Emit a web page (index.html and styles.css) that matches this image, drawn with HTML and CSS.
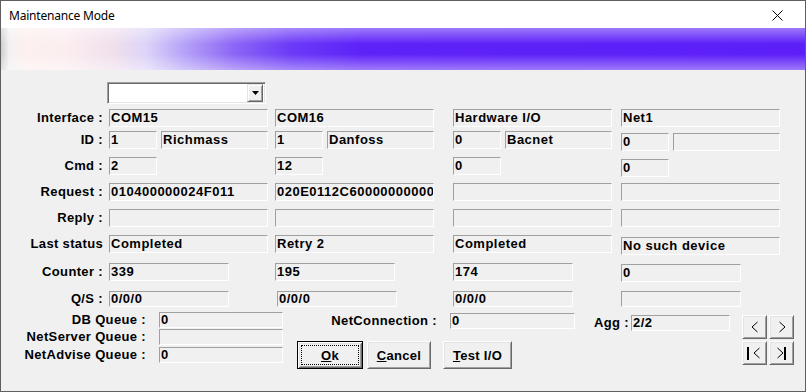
FILE: index.html
```html
<!DOCTYPE html>
<html lang="en">
<head>
    <meta charset="UTF-8">
    <title>Maintenance Mode</title>
    <link rel="stylesheet" href="styles.css">
</head>
<body>
<div class="window">
    <div class="titlebar">
        <span class="title">Maintenance Mode</span>
        <svg class="close" width="11" height="11" viewBox="0 0 11 11">
            <path d="M0.5 0.5 L10.5 10.5 M10.5 0.5 L0.5 10.5" stroke="#000" stroke-width="1" fill="none"/>
        </svg>
    </div>
    <div class="banner"></div>

    <div class="content">
        <div class="combo">
            <span class="combo-btn">
                <svg width="7" height="4" viewBox="0 0 7 4"><path d="M0 0 H7 L3.5 4 Z" fill="#000"/></svg>
            </span>
        </div>

        <div class="row tight">
            <div class="label">Interface :</div>
            <div class="cell"><div class="field">COM15</div></div>
            <div class="cell"><div class="field">COM16</div></div>
            <div class="cell"><div class="field">Hardware I/O</div></div>
            <div class="cell"><div class="field">Net1</div></div>
        </div>

        <div class="row">
            <div class="label">ID :</div>
            <div class="cell"><div class="field sm">1</div><div class="field name">Richmass</div></div>
            <div class="cell"><div class="field sm">1</div><div class="field name">Danfoss</div></div>
            <div class="cell"><div class="field sm">0</div><div class="field name">Bacnet</div></div>
            <div class="cell low"><div class="field sm">0</div><div class="field name"></div></div>
        </div>

        <div class="row">
            <div class="label">Cmd :</div>
            <div class="cell"><div class="field sm">2</div></div>
            <div class="cell"><div class="field sm">12</div></div>
            <div class="cell"><div class="field sm">0</div></div>
            <div class="cell low"><div class="field sm">0</div></div>
        </div>

        <div class="row">
            <div class="label">Request :</div>
            <div class="cell"><div class="field">010400000024F011</div></div>
            <div class="cell"><div class="field">020E0112C60000000000</div></div>
            <div class="cell"><div class="field"></div></div>
            <div class="cell"><div class="field"></div></div>
        </div>

        <div class="row">
            <div class="label">Reply :</div>
            <div class="cell"><div class="field"></div></div>
            <div class="cell"><div class="field"></div></div>
            <div class="cell"><div class="field"></div></div>
            <div class="cell"><div class="field"></div></div>
        </div>

        <div class="row wide">
            <div class="label">Last status</div>
            <div class="cell"><div class="field">Completed</div></div>
            <div class="cell"><div class="field">Retry 2</div></div>
            <div class="cell"><div class="field">Completed</div></div>
            <div class="cell low"><div class="field">No such device</div></div>
        </div>

        <div class="row wide">
            <div class="label">Counter :</div>
            <div class="cell"><div class="field md">339</div></div>
            <div class="cell"><div class="field md">195</div></div>
            <div class="cell"><div class="field md">174</div></div>
            <div class="cell low1"><div class="field md">0</div></div>
        </div>

        <div class="row short">
            <div class="label">Q/S :</div>
            <div class="cell"><div class="field md thin">0/0/0</div></div>
            <div class="cell shift"><div class="field md thin">0/0/0</div></div>
            <div class="cell"><div class="field md thin">0/0/0</div></div>
            <div class="cell"><div class="field md thin"></div></div>
        </div>

        <div class="bottom">
            <div class="queues">
                <div class="label">DB Queue :</div>
                <div class="field q thin">0</div>
                <div class="label">NetServer Queue :</div>
                <div class="field q thin"></div>
                <div class="label">NetAdvise Queue :</div>
                <div class="field q thin">0</div>
            </div>

            <div class="actions">
                <div class="netconn">
                    <span class="label">NetConnection :</span>
                    <div class="field nc thin">0</div>
                </div>
                <div class="buttons">
                    <button class="btn default ok"><u>O</u>k</button>
                    <button class="btn cancel"><u>C</u>ancel</button>
                    <button class="btn test"><u>T</u>est I/O</button>
                </div>
            </div>

            <div class="agg">
                <span class="label">Agg :</span>
                <div class="field ag thin">2/2</div>
            </div>

            <div class="nav">
                <button class="btn navbtn">
                    <svg width="23" height="22" viewBox="0 0 23 22"><polyline points="14.5,6 9,11 14.5,16" fill="none" stroke="#000"/></svg>
                </button>
                <button class="btn navbtn">
                    <svg width="23" height="22" viewBox="0 0 23 22"><polyline points="9.5,6 15,11 9.5,16" fill="none" stroke="#000"/></svg>
                </button>
                <button class="btn navbtn">
                    <svg width="23" height="22" viewBox="0 0 23 22"><rect x="4" y="5" width="2" height="13" fill="#000"/><polyline points="16.5,6 11,11 16.5,16" fill="none" stroke="#000"/></svg>
                </button>
                <button class="btn navbtn">
                    <svg width="23" height="22" viewBox="0 0 23 22"><polyline points="7.5,6 13,11 7.5,16" fill="none" stroke="#000"/><rect x="14" y="5" width="2" height="13" fill="#000"/></svg>
                </button>
            </div>
        </div>
    </div>
</div>
</body>
</html>
```

FILE: styles.css
```css
:root {
    --face: #f0f0f0;
    --shadow: #a0a0a0;
    --dark: #696969;
    --light: #e3e3e3;
    --frame: #5f5f5f;
}

body {
    margin: 0;
    background: var(--face);
    font-family: "Liberation Sans", Arial, sans-serif;
    font-size: 13px;
    font-weight: bold;
    color: #000;
}

.window {
    width: 806px;
    height: 392px;
    box-sizing: border-box;
    border: 1px solid var(--frame);
    background: var(--face);
    overflow: hidden;
}

.titlebar {
    height: 27px;
    background: #fff;
    display: flex;
    align-items: center;
    justify-content: space-between;
    padding: 0 22px 0 8px;
}

.title {
    font-family: "Noto Sans", "Open Sans", sans-serif;
    font-weight: normal;
    font-size: 12px;
    letter-spacing: -0.2px;
    margin-top: 2px;
}

.close {
    margin-top: 1px;
}

.banner {
    height: 42px;
    background:
        linear-gradient(to bottom, rgba(255, 255, 255, 0.4), rgba(255, 255, 255, 0) 38%, rgba(255, 255, 255, 0) 62%, rgba(255, 255, 255, 0.4)),
        linear-gradient(to right, #cfcfcf 0, #f3f1f1 1%, #fdf0ef 3%, #fbeef0 8%, #f0e0ec 14%, #ddd4f8 18%, #b4a0f8 23%, #8c66f6 29%, #6c3af8 36%, #5e22f8 45%, #5c1ff8 100%);
}

/* combo box */
.combo {
    width: 159px;
    height: 22px;
    box-sizing: border-box;
    margin: 12px 0 0 106px;
    padding: 1px 2px 1px 0;
    background: #fff;
    border: 1px solid;
    border-color: var(--shadow) #fff #fff var(--shadow);
    box-shadow: inset 1px 1px var(--dark), inset -1px -1px var(--light);
    display: flex;
    justify-content: flex-end;
}

.combo-btn {
    width: 16px;
    height: 18px;
    box-sizing: border-box;
    background: var(--face);
    border: 1px solid;
    border-color: var(--light) var(--dark) var(--dark) var(--light);
    box-shadow: inset 1px 1px #fff, inset -1px -1px var(--shadow);
    display: flex;
    align-items: center;
    justify-content: center;
}

/* data grid */
.row {
    display: grid;
    grid-template-columns: 108px 166px 178px 168px 159px;
    height: 26px;
    align-items: start;
}

.combo + .row {
    margin-top: 5px;
}

.row.tight { height: 22px; }
.row.wide { height: 28px; }
.row.short { height: 16px; }

.label {
    text-align: right;
    padding-right: 6px;
    line-height: 18px;
    letter-spacing: 0.35px;
    white-space: nowrap;
}

.row.short .label {
    line-height: 16px;
}

.cell {
    display: flex;
    gap: 4px;
}

.cell.low { margin-top: 2px; }
.cell.low1 { margin-top: 1px; }
.cell.shift { margin-left: 2px; }

.field {
    width: 159px;
    height: 18px;
    box-sizing: border-box;
    border: 1px solid;
    border-color: var(--shadow) #fff #fff var(--shadow);
    padding-left: 1px;
    line-height: 16px;
    letter-spacing: 0.5px;
    white-space: nowrap;
    overflow: hidden;
}

.field.sm { width: 48px; }
.field.name { width: 107px; }
.field.md { width: 120px; }
.field.thin { height: 16px; line-height: 14px; }

/* lower section */
.bottom {
    display: flex;
    align-items: flex-start;
    margin-top: 5px;
}

.queues {
    display: grid;
    grid-template-columns: 145px 124px;
    grid-template-rows: 17px 18px 16px;
    column-gap: 13px;
    align-items: start;
}

.queues .label {
    padding-right: 0;
    line-height: 16px;
}

.field.q { width: 124px; }

.actions {
    margin-left: 14px;
    width: 278px;
}

.netconn {
    display: flex;
    justify-content: flex-end;
    gap: 13px;
    margin-top: 1px;
}

.netconn .label,
.agg .label {
    padding-right: 0;
    line-height: 16px;
}

.field.nc { width: 125px; }

.buttons {
    display: flex;
    margin-top: 12px;
}

.btn {
    position: relative;
    height: 28px;
    padding: 0;
    box-sizing: border-box;
    background: var(--face);
    border: 1px solid;
    border-color: #fff var(--dark) var(--dark) #fff;
    box-shadow: inset 1px 1px var(--light), inset -1px -1px var(--shadow);
    font-family: "Liberation Sans", Arial, sans-serif;
    font-size: 13px;
    font-weight: bold;
    letter-spacing: 0.3px;
    color: #000;
}

.btn.default {
    border-color: #000;
    box-shadow: inset 1px 1px #fff, inset -1px -1px var(--dark), inset 2px 2px var(--light), inset -2px -2px var(--shadow);
}

.btn.default::after {
    content: "";
    position: absolute;
    inset: 3px;
    border: 1px dotted #000;
}

.btn.ok { width: 66px; }
.btn.cancel { width: 64px; margin-left: 4px; }
.btn.test { width: 69px; margin-left: 12px; }

.agg {
    display: flex;
    gap: 2px;
    margin: 3px 0 0 19px;
}

.agg .label { width: 35px; text-align: left; }

.field.ag { width: 99px; }

.nav {
    display: grid;
    grid-template-columns: 25px 25px;
    grid-auto-rows: 24px;
    gap: 2px;
    margin: 3px 0 0 12px;
}

.btn.navbtn {
    width: 25px;
    height: 24px;
    display: flex;
}

.navbtn svg {
    display: block;
}
```
